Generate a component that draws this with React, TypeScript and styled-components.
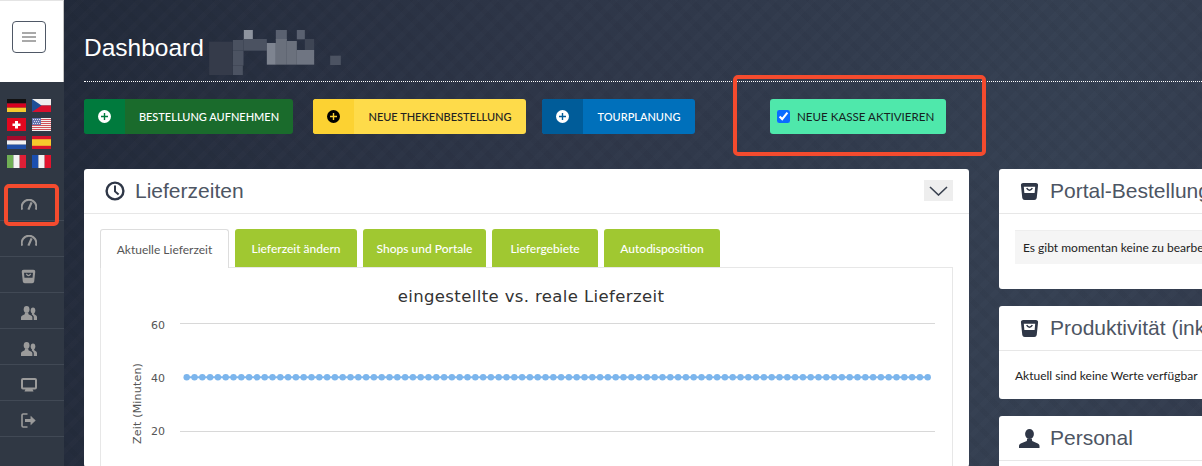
import React from 'react';
import styled, { createGlobalStyle } from 'styled-components';

const GlobalStyle = createGlobalStyle`
    html, body {
        margin: 0;
        padding: 0;
        width: 1202px;
        height: 466px;
        overflow: hidden;
        background: #2d3546;
    }
    * {
        box-sizing: border-box;
    }
`;

const Page = styled.div`
    position: relative;
    display: flex;
    width: 1202px;
    height: 466px;
    overflow: hidden;
    font-family: 'Lato', 'Liberation Sans', sans-serif;
`;

/* sidebar */
const Sidebar = styled.aside`
    flex: 0 0 64px;
    background: #303844;
`;
const BrandBox = styled.div`
    height: 82px;
    background: #fff;
    border-top: 1px solid #e4e4e4;
    border-right: 1px solid #c4c4c4;
    display: flex;
    align-items: flex-start;
    padding: 20px 0 0 12px;
`;
const MenuButton = styled.button`
    width: 34px;
    height: 32px;
    padding: 0;
    background: #fff;
    border: 1px solid #4f5866;
    border-radius: 4px;
    display: flex;
    flex-direction: column;
    align-items: center;
    justify-content: center;
    gap: 2px;
`;
const MenuBar = styled.span`
    width: 14px;
    height: 2px;
    background: #a9a9a9;
`;
const FlagGrid = styled.div`
    display: grid;
    grid-template-columns: 19px 19px;
    grid-auto-rows: 13px;
    column-gap: 6px;
    row-gap: 5.5px;
    padding: 17px 0 0 7px;
    height: 103px;
`;
const NavRow = styled.div`
    height: 36px;
    padding: 4px 0 0 21px;
    border-bottom: 1px solid #414955;
    display: flex;
    align-items: center;
    color: #9b9b9b;
`;

/* main */
const Main = styled.main`
    flex: 1;
    min-width: 0;
    padding-left: 20px;
    background-color: #2e3647;
    background-image:
        repeating-linear-gradient(45deg, rgba(0, 0, 0, 0.03) 0 5px, transparent 5px 14px),
        repeating-linear-gradient(-45deg, rgba(255, 255, 255, 0.01) 0 5px, transparent 5px 14px),
        linear-gradient(100deg, #222a3a 0, #2e3648 40%, #354052 85%, #333c4e 100%);
`;
const TitleRow = styled.header`
    height: 82px;
    padding-top: 21px;
    display: flex;
    align-items: flex-start;
    border-bottom: 1px dotted #fff;
`;
const Title = styled.h1`
    margin: -2px 0 0;
    font: 400 24.5px/58px 'Liberation Sans', sans-serif;
    color: #fff;
    height: 58px;
`;
const Pixelated = styled.svg`
    margin: 9px 0 0 5px;
`;
const Toolbar = styled.div`
    display: flex;
    align-items: flex-start;
    padding-top: 17px;
    height: 87px;
`;
const ActionButton = styled.button<{ $main: string; $text: string; $width: number; $after: number }>`
    width: ${(p) => p.$width}px;
    height: 35px;
    margin-right: ${(p) => p.$after}px;
    padding: 0;
    display: flex;
    align-items: stretch;
    border: 0;
    border-radius: 3px;
    overflow: hidden;
    background: ${(p) => p.$main};
    color: ${(p) => p.$text};
    font: 500 11px/35px 'Lato', sans-serif;
    text-transform: uppercase;
`;
const ButtonIcon = styled.span<{ $dark: string }>`
    flex: 0 0 41px;
    background: ${(p) => p.$dark};
    display: flex;
    align-items: center;
    justify-content: center;
`;
const ButtonLabel = styled.span`
    flex: 1;
    text-align: center;
    white-space: nowrap;
`;
const KasseToggle = styled.label`
    margin-left: 75px;
    width: 176px;
    height: 35px;
    display: flex;
    align-items: center;
    gap: 7px;
    padding-left: 7px;
    background: #4fe8ab;
    border-radius: 3px;
    color: #16221f;
    font: 400 11.6px 'Lato', sans-serif;
    text-transform: uppercase;
    white-space: nowrap;
    input {
        width: 13px;
        height: 13px;
        margin: 0;
        accent-color: #0a6cff;
    }
`;
const Columns = styled.div`
    display: grid;
    grid-template-columns: 885px 300px;
    column-gap: 30px;
    align-items: start;
`;
const Stack = styled.div`
    display: flex;
    flex-direction: column;
    gap: 17px;
`;
const Card = styled.section<{ $height?: number }>`
    background: #fff;
    border-radius: 3px;
    ${(p) => (p.$height ? `height: ${p.$height}px;` : '')}
`;
const CardHeader = styled.div<{ $inset: number }>`
    height: 45px;
    padding: 0 16px 0 ${(p) => p.$inset}px;
    display: flex;
    align-items: center;
    border-bottom: 1px solid #e7e7e7;
    color: #2f3747;
`;
const HeaderIcon = styled.span<{ $width: number }>`
    flex: 0 0 ${(p) => p.$width}px;
    margin-right: 10px;
    display: flex;
    align-items: center;
    justify-content: center;
`;
const CardTitle = styled.h2`
    margin: 0;
    flex: 1;
    font: 400 21px 'Liberation Sans', sans-serif;
    color: #4d5563;
    white-space: nowrap;
`;
const Collapse = styled.span`
    width: 29px;
    height: 21px;
    margin-top: -1px;
    background: #eee;
    display: flex;
    align-items: center;
    justify-content: center;
`;
const TabsArea = styled.div`
    padding: 15px 16px 0;
`;
const TabBar = styled.div`
    display: flex;
    gap: 6px;
    height: 38px;
    position: relative;
    z-index: 1;
`;
const Tab = styled.div<{ $active?: boolean; $width: number }>`
    width: ${(p) => p.$width}px;
    height: 38px;
    display: flex;
    align-items: center;
    justify-content: center;
    border-radius: 3px 3px 0 0;
    font: ${(p) => (p.$active ? 400 : 500)} 12px 'Lato', sans-serif;
    color: ${(p) => (p.$active ? '#555' : '#fff')};
    background: ${(p) => (p.$active ? '#fff' : '#a0c831')};
    ${(p) => (p.$active ? 'border: 1px solid #ddd; border-bottom: 0; height: 39px;' : '')}
`;
const TabPane = styled.div`
    height: 200px;
    border: 1px solid #e7e7e7;
    background: #fff;
`;
const NoticeBox = styled.div`
    margin: 16px 0 0 16px;
    height: 34px;
    padding-left: 8px;
    display: flex;
    align-items: center;
    background: #f5f5f5;
    border-top: 1px solid #eee;
    font: 400 12px 'Lato', sans-serif;
    color: #222;
    white-space: nowrap;
`;
const CardText = styled.p`
    margin: 17px 0 0 16px;
    font: 400 12px 'Lato', sans-serif;
    color: #222;
    white-space: nowrap;
`;

/* red annotations painted on the screenshot */
const Marker = styled.div<{ $x: number; $y: number; $w: number; $h: number; $b: number }>`
    position: absolute;
    left: ${(p) => p.$x}px;
    top: ${(p) => p.$y}px;
    width: ${(p) => p.$w}px;
    height: ${(p) => p.$h}px;
    border: ${(p) => p.$b}px solid #f44b2e;
    border-radius: 5px;
    pointer-events: none;
`;

const Gauge = () => (
    <svg width="16" height="12" viewBox="0 0 16 12" fill="none" stroke="currentColor" strokeWidth="2">
        <path d="M1.2 10.6 A7.28 7.28 0 1 1 14.8 10.6" />
        <path d="M7.4 10.6 L10.6 3.4" strokeWidth="2.2" />
    </svg>
);

const Bag = ({ size }: { size: number }) => (
    <svg width={size} height={size} viewBox="0 0 20 20" fill="currentColor" stroke="none">
        <path
            fillRule="evenodd"
            d="M3.5 1h13a2.5 2.5 0 0 1 2.5 2.8l-1.4 13A2.6 2.6 0 0 1 15 19H5a2.6 2.6 0 0 1-2.6-2.2L1 3.8A2.5 2.5 0 0 1 3.5 1zM4 5l.6 6.5h10.8L16 5z"
        />
        <path d="M7 6.5 Q10 11 13 6.5" fill="none" stroke="currentColor" strokeWidth="1.6" />
    </svg>
);

const Users = () => (
    <svg width="16" height="14" viewBox="0 0 16 14" fill="currentColor">
        <ellipse cx="5.6" cy="3.4" rx="2.9" ry="3.4" />
        <path d="M4 6.5h3.2l.3 1.7 3 1.6c.6.4.9 1 .9 1.7V14H0v-2.5c0-.7.3-1.3.9-1.7l2.8-1.6z" />
        <ellipse cx="12" cy="4.4" rx="2.3" ry="2.9" />
        <path d="M11 7h2.1l.2 1.3 1.9 1.1c.5.3.8.9.8 1.5V14h-3.2v-2.6c0-1.1-.5-1.9-1.4-2.4l-.6-.4z" />
    </svg>
);

const Person = () => (
    <svg width="21" height="19" viewBox="0 0 21 19" fill="currentColor">
        <ellipse cx="10.5" cy="5" rx="4.4" ry="5" />
        <path d="M8.2 9.5h4.6l.4 2.6 5.6 2.4c1 .4 1.7 1.4 1.7 2.5V19H0v-2c0-1.1.7-2.1 1.7-2.5l6.1-2.4z" />
    </svg>
);

const Monitor = () => (
    <svg width="16" height="14" viewBox="0 0 16 14" fill="none">
        <rect x="1" y="1" width="14" height="9.5" rx="1" stroke="currentColor" strokeWidth="2" />
        <path d="M4.5 11h7l1 2.5h-9z" fill="currentColor" />
    </svg>
);

const SignOut = () => (
    <svg width="15" height="15" viewBox="0 0 15 15" fill="none" stroke="currentColor">
        <path d="M6.5 1H2.2A1.2 1.2 0 0 0 1 2.2v10.6A1.2 1.2 0 0 0 2.2 14h4.3" strokeWidth="1.6" />
        <path d="M4 7.5h6.5" strokeWidth="3" />
        <path d="M9.8 3.2 14.4 7.5 9.8 11.8z" fill="currentColor" strokeWidth="0.5" />
    </svg>
);

const Clock = () => (
    <svg width="20" height="20" viewBox="0 0 20 20" fill="none" stroke="currentColor" strokeWidth="2.4">
        <circle cx="10" cy="10" r="8.4" />
        <path d="M10 4.6V10.4L13.6 13.6" strokeWidth="2" />
    </svg>
);

const Chevron = () => (
    <svg width="19" height="10" viewBox="0 0 19 10" fill="none" stroke="#3a4250" strokeWidth="1.6">
        <path d="M1 1l8.5 8L18 1" />
    </svg>
);

const PlusCircle = ({ bg, fg }: { bg: string; fg: string }) => (
    <svg width="13" height="13" viewBox="0 0 13 13">
        <circle cx="6.5" cy="6.5" r="6.5" fill={bg} />
        <path d="M6.5 3v7M3 6.5h7" stroke={fg} strokeWidth="1.4" />
    </svg>
);

const flags: React.ReactNode[] = [
    <>
        <rect width="19" height="4.4" fill="#111" />
        <rect y="4.4" width="19" height="4.3" fill="#d8001f" />
        <rect y="8.7" width="19" height="4.3" fill="#f5c92e" />
    </>,
    <>
        <rect width="19" height="6.5" fill="#eee" />
        <rect y="6.5" width="19" height="6.5" fill="#d9102d" />
        <path d="M0 0 9.5 6.5 0 13z" fill="#1f4f96" />
    </>,
    <>
        <rect width="19" height="13" fill="#e2071f" />
        <path d="M8 3h3v2.5h2.5v2.5H11v2.5H8V8H5.5V5.5H8z" fill="#fff" />
    </>,
    <>
        <rect width="19" height="13" fill="#f4f0f0" />
        <path d="M0 1h19v1H0zM0 3h19v1H0zM0 5h19v1H0zM0 7h19v1H0zM0 9h19v1H0zM0 11h19v1H0z" fill="#d2505a" />
        <rect width="9" height="7" fill="#6674b0" />
        <path d="M1 1h1v1H1zM3 1h1v1H3zM5 1h1v1H5zM7 1h1v1H7zM2 3h1v1H2zM4 3h1v1H4zM6 3h1v1H6zM1 5h1v1H1zM3 5h1v1H3zM5 5h1v1H5zM7 5h1v1H7z" fill="#d8dcec" />
    </>,
    <>
        <rect width="19" height="4.4" fill="#a50b2c" />
        <rect y="4.4" width="19" height="4.3" fill="#f2f2f2" />
        <rect y="8.7" width="19" height="4.3" fill="#1f4fa8" />
    </>,
    <>
        <rect width="19" height="13" fill="#d9142b" />
        <rect y="3.2" width="19" height="6.6" fill="#f7c92c" />
    </>,
    <>
        <rect width="6.4" height="13" fill="#6fae55" />
        <rect x="6.4" width="6.3" height="13" fill="#f2f2f2" />
        <rect x="12.7" width="6.3" height="13" fill="#de1f36" />
    </>,
    <>
        <rect width="6.4" height="13" fill="#1b4fb0" />
        <rect x="6.4" width="6.3" height="13" fill="#f2f2f2" />
        <rect x="12.7" width="6.3" height="13" fill="#e2132e" />
    </>,
];

const blurBlocks: [number, number, number, number, string][] = [
    [0, 35, 70, 100, '#353b4a'],
    [104, 0, 27, 30, '#8e949f'],
    [200, 0, 33, 30, '#5a6170'],
    [263, 0, 24, 28, '#5a6170'],
    [71, 30, 32, 32, '#4a5160'],
    [103, 27, 70, 35, '#4b5261'],
    [173, 39, 27, 65, '#7e8490'],
    [200, 27, 33, 77, '#6a707c'],
    [233, 33, 30, 71, '#6b717d'],
    [263, 60, 52, 44, '#6f7582'],
    [287, 27, 28, 33, '#3e4554'],
    [71, 62, 32, 45, '#4c5362'],
    [71, 107, 30, 28, '#4c5362'],
    [363, 77, 32, 28, '#4c5362'],
];

const navIcons: React.ReactNode[] = [
    <Gauge />,
    <Gauge />,
    <Bag size={15} />,
    <Users />,
    <Users />,
    <Monitor />,
    <SignOut />,
];

const LieferzeitChart = () => {
    const dots = Array.from({ length: 96 }, (_, i) => 186.7 + i * 7.8);
    return (
        <svg width="851" height="198" viewBox="101 268 851 198" fontFamily="'DejaVu Sans', sans-serif">
            <text x="531" y="302" textAnchor="middle" fontSize="16.5" letterSpacing="0.38" fill="#333">
                eingestellte vs. reale Lieferzeit
            </text>
            <path d="M180 323.5H935M180 431.5H935" stroke="#d8d8d8" />
            <g fontSize="11" fill="#555" textAnchor="end">
                <text x="165" y="329">60</text>
                <text x="165" y="382">40</text>
                <text x="165" y="435">20</text>
            </g>
            <text x="0" y="0" transform="translate(141 444) rotate(-90)" fontSize="11" letterSpacing="0.2" fill="#555">
                Zeit (Minuten)
            </text>
            <path d={`M${dots[0]} 377.3H${dots[dots.length - 1]}`} stroke="#7cb5ec" strokeWidth="2" />
            <g fill="#7cb5ec">
                {dots.map((x) => (
                    <circle key={x} cx={x} cy="377.3" r="3.2" />
                ))}
            </g>
        </svg>
    );
};

export default function App() {
    return (
        <Page>
            <GlobalStyle />
            <Sidebar>
                <BrandBox>
                    <MenuButton>
                        <MenuBar />
                        <MenuBar />
                        <MenuBar />
                    </MenuButton>
                </BrandBox>
                <FlagGrid>
                    {flags.map((flag, i) => (
                        <svg key={i} width="19" height="13" viewBox="0 0 19 13">
                            {flag}
                        </svg>
                    ))}
                </FlagGrid>
                {navIcons.map((icon, i) => (
                    <NavRow key={i}>{icon}</NavRow>
                ))}
            </Sidebar>
            <Main>
                <TitleRow>
                    <Title>Dashboard</Title>
                    <Pixelated width="132" height="45" viewBox="0 0 395 135">
                        {blurBlocks.map(([x, y, w, h, c]) => (
                            <rect key={`${x}-${y}`} x={x} y={y} width={w} height={h} fill={c} />
                        ))}
                    </Pixelated>
                </TitleRow>
                <Toolbar>
                    <ActionButton $main="#1a6b2c" $text="#fff" $width={209} $after={20}>
                        <ButtonIcon $dark="#007a3d">
                            <PlusCircle bg="#fff" fg="#007a3d" />
                        </ButtonIcon>
                        <ButtonLabel>Bestellung aufnehmen</ButtonLabel>
                    </ActionButton>
                    <ActionButton $main="#fedb4a" $text="#222" $width={213} $after={16}>
                        <ButtonIcon $dark="#fcd232">
                            <PlusCircle bg="#000" fg="#fcd232" />
                        </ButtonIcon>
                        <ButtonLabel>Neue Thekenbestellung</ButtonLabel>
                    </ActionButton>
                    <ActionButton $main="#0070bb" $text="#fff" $width={153} $after={0}>
                        <ButtonIcon $dark="#005c99">
                            <PlusCircle bg="#fff" fg="#005c99" />
                        </ButtonIcon>
                        <ButtonLabel>Tourplanung</ButtonLabel>
                    </ActionButton>
                    <KasseToggle>
                        <input type="checkbox" defaultChecked />
                        Neue Kasse aktivieren
                    </KasseToggle>
                </Toolbar>
                <Columns>
                    <Card>
                        <CardHeader $inset={21}>
                            <HeaderIcon $width={20}>
                                <Clock />
                            </HeaderIcon>
                            <CardTitle>Lieferzeiten</CardTitle>
                            <Collapse>
                                <Chevron />
                            </Collapse>
                        </CardHeader>
                        <TabsArea>
                            <TabBar>
                                <Tab $active $width={129}>Aktuelle Lieferzeit</Tab>
                                <Tab $width={122}>Lieferzeit ändern</Tab>
                                <Tab $width={123}>Shops und Portale</Tab>
                                <Tab $width={106}>Liefergebiete</Tab>
                                <Tab $width={116}>Autodisposition</Tab>
                            </TabBar>
                            <TabPane>
                                <LieferzeitChart />
                            </TabPane>
                        </TabsArea>
                    </Card>
                    <Stack>
                        <Card $height={120}>
                            <CardHeader $inset={20}>
                                <HeaderIcon $width={21}>
                                    <Bag size={19} />
                                </HeaderIcon>
                                <CardTitle>Portal-Bestellungen</CardTitle>
                            </CardHeader>
                            <NoticeBox>Es gibt momentan keine zu bearbeitenden Bestellungen</NoticeBox>
                        </Card>
                        <Card $height={93}>
                            <CardHeader $inset={20}>
                                <HeaderIcon $width={21}>
                                    <Bag size={19} />
                                </HeaderIcon>
                                <CardTitle>Produktivität (inkl. Pausen)</CardTitle>
                            </CardHeader>
                            <CardText>Aktuell sind keine Werte verfügbar</CardText>
                        </Card>
                        <Card $height={60}>
                            <CardHeader $inset={20}>
                                <HeaderIcon $width={21}>
                                    <Person />
                                </HeaderIcon>
                                <CardTitle>Personal</CardTitle>
                            </CardHeader>
                        </Card>
                    </Stack>
                </Columns>
            </Main>
            <Marker $x={4} $y={184} $w={55} $h={42} $b={4} />
            <Marker $x={733} $y={75} $w={253} $h={81} $b={4} />
        </Page>
    );
}
